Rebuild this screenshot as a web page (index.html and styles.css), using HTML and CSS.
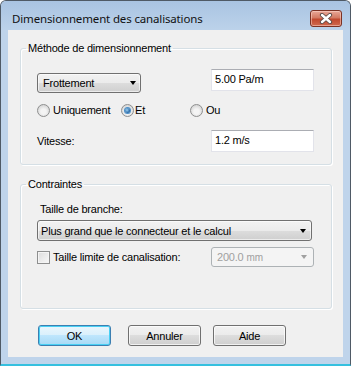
FILE: index.html
```html
<!DOCTYPE html>
<html lang="fr">
<head>
    <meta charset="UTF-8">
    <title>Dimensionnement des canalisations</title>
    <link rel="stylesheet" href="styles.css">
</head>
<body>

    <!-- Fenetre de dialogue -->
    <div class="window">
        <div class="titlebar">
            <span class="title">Dimensionnement des canalisations</span>
            <button class="close" aria-label="Fermer">
                <svg width="14" height="11" viewBox="0 0 14 11">
                    <path d="M3 2 L11 9 M11 2 L3 9" stroke="#5a4a46" stroke-width="4.2" stroke-linecap="round"/>
                    <path d="M3 2 L11 9 M11 2 L3 9" stroke="#fff" stroke-width="2.4" stroke-linecap="round"/>
                </svg>
            </button>
        </div>

        <div class="client">
            <fieldset class="group group-method">
                <legend>Méthode de dimensionnement</legend>
                <div class="row row-top">
                    <div class="combo combo-method">Frottement<span class="arrow"></span></div>
                    <div class="textbox">5.00 Pa/m</div>
                </div>
                <div class="row row-radios">
                    <label class="radio-item radio-uni"><span class="radio"></span>Uniquement</label>
                    <label class="radio-item radio-et"><span class="radio checked"></span>Et</label>
                    <label class="radio-item"><span class="radio"></span>Ou</label>
                </div>
                <div class="row row-speed">
                    <span class="label">Vitesse:</span>
                    <div class="textbox">1.2 m/s</div>
                </div>
            </fieldset>

            <fieldset class="group group-limits">
                <legend>Contraintes</legend>
                <div class="label label-branch">Taille de branche:</div>
                <div class="combo combo-wide">Plus grand que le connecteur et le calcul<span class="arrow"></span></div>
                <div class="row row-limit">
                    <label class="check-item"><span class="checkbox"></span>Taille limite de canalisation:</label>
                    <div class="combo combo-disabled">200.0 <small>mm</small><span class="arrow"></span></div>
                </div>
            </fieldset>

            <div class="buttons">
                <button class="btn btn-default">OK</button>
                <button class="btn">Annuler</button>
                <button class="btn">Aide</button>
            </div>
        </div>
    </div>

</body>
</html>
```

FILE: styles.css
```css
/* Base */
* {
    margin: 0;
    padding: 0;
    box-sizing: border-box;
}

body {
    font-family: 'Liberation Sans', Arial, sans-serif;
    font-size: 11px;
    letter-spacing: -0.2px;
    color: #000;
    background-color: #fff;
}

/* Fenetre */
.window {
    width: 351px;
    height: 366px;
    background-color: #bfd4eb;
    border: 1px solid #4f5a66;
    border-bottom: 2px solid #35c0df;
    border-radius: 6px 6px 0 0;
    display: flex;
    flex-direction: column;
}

.titlebar {
    height: 29px;
    display: flex;
    align-items: flex-start;
    padding: 0 8px 0 11px;
    background: linear-gradient(#a9c4e2, #bcd2ea);
    border-radius: 5px 5px 0 0;
}

.title {
    font-family: 'Noto Sans', 'Open Sans', sans-serif;
    font-size: 11.5px;
    letter-spacing: -0.15px;
    line-height: 16px;
    margin-top: 10px;
    color: #111;
}

.close {
    margin-left: auto;
    margin-top: 9px;
    width: 32px;
    height: 17px;
    border: 1px solid #7b3224;
    border-radius: 3px;
    background: linear-gradient(#e9a898, #d37a63 45%, #c1492f 55%, #d06a4f);
    display: flex;
    align-items: center;
    justify-content: center;
    box-shadow: inset 0 0 0 1px rgba(255, 220, 210, 0.5);
}

.client {
    flex: 1;
    margin: 0 7px 7px 7px;
    background-color: #f0f0f0;
    padding: 12px 11px 0 12px;
}

/* Groupes */
.group {
    border: 1px solid #d5dfe5;
    border-radius: 3px;
    padding: 14px 17px 12px 16px;
    box-shadow: inset 1px 1px 0 #fff, 1px 1px 0 #fff;
}

.group legend {
    margin-left: -11px;
    padding: 0 2px;
    line-height: 13px;
    color: #000;
}

.group-limits {
    margin-top: 13px;
    padding-top: 12px;
    padding-bottom: 41px;
}

.row {
    display: flex;
    align-items: center;
}

.row-top {
    align-items: flex-start;
    justify-content: space-between;
}

.row-radios {
    margin-top: 11px;
}

.row-speed {
    margin-top: 13px;
    justify-content: space-between;
}

.row-limit {
    margin-top: 6px;
    justify-content: space-between;
}

.label {
    line-height: 13px;
    color: #000;
}

.label-branch {
    padding-left: 3px;
}

/* Champs */
.textbox {
    width: 103px;
    height: 22px;
    background-color: #fff;
    border: 1px solid #e2e3ea;
    border-top-color: #abadb3;
    padding: 3px 3px 0 3px;
    line-height: 13px;
}

.combo {
    display: flex;
    align-items: center;
    height: 20px;
    padding: 0 5px 0 5px;
    border: 1px solid #707070;
    border-radius: 3px;
    background: linear-gradient(#f2f2f2, #ebebeb 50%, #dddddd 50%, #cfcfcf);
    box-shadow: inset 0 0 0 1px rgba(255, 255, 255, 0.6);
    white-space: nowrap;
}

.combo-method {
    width: 104px;
    margin-top: 4px;
    padding-right: 4px;
}

.combo-wide {
    width: 275px;
    height: 21px;
    margin-top: 4px;
    padding-left: 3px;
}

.combo-disabled {
    width: 103px;
    color: #a0a0a0;
    border-color: #adb2b5;
    background: #f4f4f4;
    box-shadow: none;
    padding-right: 6px;
}

.combo-disabled small {
    font-size: 10px;
    margin-left: 3px;
}

.arrow {
    margin-left: auto;
    width: 0;
    height: 0;
    border-top: 4px solid #000;
    border-left: 3.5px solid transparent;
    border-right: 3.5px solid transparent;
}

.combo-disabled .arrow {
    border-top-color: #a0a0a0;
}

/* Boutons radio et case a cocher */
.radio-item, .check-item {
    display: flex;
    align-items: center;
    gap: 3px;
    line-height: 13px;
}

.radio-uni {
    width: 84px;
}

.radio-et {
    width: 69px;
    gap: 1px;
}

.radio {
    width: 13px;
    height: 13px;
    border-radius: 50%;
    border: 1px solid #8e8f8f;
    background: radial-gradient(circle at 50% 60%, #f4f4f4 30%, #d6d6d6 75%, #c4c4c4);
    display: flex;
    align-items: center;
    justify-content: center;
}

.radio.checked::after {
    content: "";
    width: 5px;
    height: 5px;
    border-radius: 50%;
    background: radial-gradient(circle at 40% 40%, #9dd2f4, #1c5fa0 70%);
    box-shadow: 0 0 0 1px #4b8fc8;
}

.checkbox {
    width: 13px;
    height: 13px;
    border: 1px solid #8e8f8f;
    background: linear-gradient(135deg, #dcdcdc, #f8f8f8);
    box-shadow: inset 0 0 0 1px #f4f4f4;
}

/* Boutons */
.buttons {
    display: flex;
    gap: 12px;
    margin-top: 16px;
    padding-left: 18px;
}

.btn {
    width: 73px;
    height: 21px;
    font-family: inherit;
    font-size: 11px;
    letter-spacing: -0.2px;
    border: 1px solid #707070;
    border-radius: 3px;
    background: linear-gradient(#f2f2f2, #ebebeb 50%, #dddddd 50%, #cfcfcf);
    box-shadow: inset 0 0 0 1px rgba(255, 255, 255, 0.7);
    color: #000;
}

.btn-default {
    margin-right: 5px;
    border-color: #3c7fb1;
    background: linear-gradient(#eaf6fd, #d9f0fc 50%, #bee6fd 50%, #a7d9f5);
    box-shadow: inset 0 0 0 1px #48d0f4;
}
```
